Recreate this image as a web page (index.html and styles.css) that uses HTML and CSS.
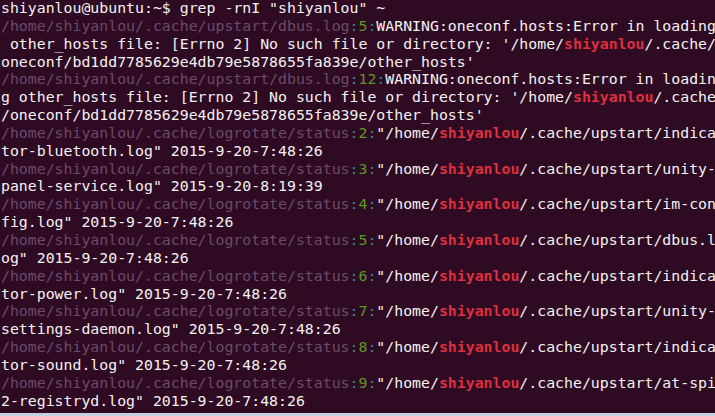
FILE: index.html
```html
<!DOCTYPE html>
<html lang="en">
<head>
  <meta charset="UTF-8">
  <title>Terminal</title>
  <link rel="stylesheet" href="styles.css">
</head>
<body>
  <div class="term">
    <div class="ln">shiyanlou@ubuntu:~$ grep -rnI "shiyanlou" ~</div>
    <div class="ln"><span class="fn">/home/shiyanlou/.cache/upstart/dbus.log</span><span class="sep">:</span><span class="num">5</span><span class="sep">:</span>WARNING:oneconf.hosts:Error in loading</div>
    <div class="ln"> other_hosts file: [Errno 2] No such file or directory: '/home/<span class="hit">shiyanlou</span>/.cache/</div>
    <div class="ln">oneconf/bd1dd7785629e4db79e5878655fa839e/other_hosts'</div>
    <div class="ln"><span class="fn">/home/shiyanlou/.cache/upstart/dbus.log</span><span class="sep">:</span><span class="num">12</span><span class="sep">:</span>WARNING:oneconf.hosts:Error in loadin</div>
    <div class="ln">g other_hosts file: [Errno 2] No such file or directory: '/home/<span class="hit">shiyanlou</span>/.cache</div>
    <div class="ln">/oneconf/bd1dd7785629e4db79e5878655fa839e/other_hosts'</div>
    <div class="ln"><span class="fn">/home/shiyanlou/.cache/logrotate/status</span><span class="sep">:</span><span class="num">2</span><span class="sep">:</span>"/home/<span class="hit">shiyanlou</span>/.cache/upstart/indica</div>
    <div class="ln">tor-bluetooth.log" 2015-9-20-7:48:26</div>
    <div class="ln"><span class="fn">/home/shiyanlou/.cache/logrotate/status</span><span class="sep">:</span><span class="num">3</span><span class="sep">:</span>"/home/<span class="hit">shiyanlou</span>/.cache/upstart/unity-</div>
    <div class="ln">panel-service.log" 2015-9-20-8:19:39</div>
    <div class="ln"><span class="fn">/home/shiyanlou/.cache/logrotate/status</span><span class="sep">:</span><span class="num">4</span><span class="sep">:</span>"/home/<span class="hit">shiyanlou</span>/.cache/upstart/im-con</div>
    <div class="ln">fig.log" 2015-9-20-7:48:26</div>
    <div class="ln"><span class="fn">/home/shiyanlou/.cache/logrotate/status</span><span class="sep">:</span><span class="num">5</span><span class="sep">:</span>"/home/<span class="hit">shiyanlou</span>/.cache/upstart/dbus.l</div>
    <div class="ln">og" 2015-9-20-7:48:26</div>
    <div class="ln"><span class="fn">/home/shiyanlou/.cache/logrotate/status</span><span class="sep">:</span><span class="num">6</span><span class="sep">:</span>"/home/<span class="hit">shiyanlou</span>/.cache/upstart/indica</div>
    <div class="ln">tor-power.log" 2015-9-20-7:48:26</div>
    <div class="ln"><span class="fn">/home/shiyanlou/.cache/logrotate/status</span><span class="sep">:</span><span class="num">7</span><span class="sep">:</span>"/home/<span class="hit">shiyanlou</span>/.cache/upstart/unity-</div>
    <div class="ln">settings-daemon.log" 2015-9-20-7:48:26</div>
    <div class="ln"><span class="fn">/home/shiyanlou/.cache/logrotate/status</span><span class="sep">:</span><span class="num">8</span><span class="sep">:</span>"/home/<span class="hit">shiyanlou</span>/.cache/upstart/indica</div>
    <div class="ln">tor-sound.log" 2015-9-20-7:48:26</div>
    <div class="ln"><span class="fn">/home/shiyanlou/.cache/logrotate/status</span><span class="sep">:</span><span class="num">9</span><span class="sep">:</span>"/home/<span class="hit">shiyanlou</span>/.cache/upstart/at-spi</div>
    <div class="ln">2-registryd.log" 2015-9-20-7:48:26</div>
  </div>
  <div class="strip"></div>
</body>
</html>
```
FILE: styles.css
```css
html, body {
  margin: 0;
  padding: 0;
  background: #c2d2e2;
}
.term {
  width: 715px;
  height: 413px;
  overflow: hidden;
  background: #2e0a23;
  color: #f4f2f2;
  font-family: "DejaVu Sans Mono", "Liberation Mono", monospace;
  font-size: 14.85px;
  line-height: 17.85px;
  padding-left: 1px;
  box-sizing: border-box;
}
.ln {
  white-space: pre;
  height: 17.85px;
}
.fn {
  color: #6c4b69;
}
.sep {
  color: #2f8a8e;
}
.num {
  color: #5c9a1e;
}
.hit {
  color: #df2f3d;
  font-weight: bold;
}
.strip {
  height: 3px;
  background: #c2d2e2;
}
```
